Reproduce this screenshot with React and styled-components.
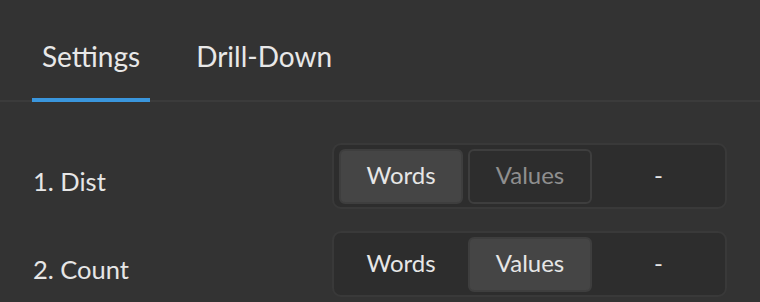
import React, { useState } from "react";
import styled, { createGlobalStyle } from "styled-components";

const Global = createGlobalStyle`
  html, body { margin: 0; padding: 0; background: #333333; }
  body { font-family: Lato, "Noto Sans", sans-serif; color: #e6e6e6; }
  * { box-sizing: border-box; }
`;

const Page = styled.div`
  width: 760px;
  height: 302px;
  overflow: hidden;
  background: #333333;
`;

const TabBar = styled.div`
  display: flex;
  align-items: stretch;
  height: 102px;
  padding: 0 32px;
  border-bottom: 2px solid #3b3b3b;
  gap: 36px;
`;

const Tab = styled.div`
  display: flex;
  align-items: center;
  padding: 14px 10px 0;
  font-size: 28px;
  color: #e8e8e8;
  border-bottom: 4px solid ${(p) => (p.$active ? "#3a96dd" : "transparent")};
  margin-bottom: -2px;
  cursor: pointer;
`;

const Content = styled.div`
  display: flex;
  flex-direction: column;
  gap: 22px;
  padding: 41px 33px 0 33px;
`;

const Row = styled.div`
  display: grid;
  grid-template-columns: 299px 1fr;
  align-items: center;
`;

const Label = styled.div`
  font-size: 25.5px;
  color: #e6e6e6;
  padding-top: 10px;
`;

const Segmented = styled.div`
  display: flex;
  align-items: center;
  gap: 5px;
  height: 66px;
  padding: 0 5px;
  background: #2d2d2d;
  border: 2px solid #393939;
  border-radius: 9px;
`;

const SegButton = styled.div`
  width: 124px;
  height: 55px;
  display: flex;
  align-items: center;
  justify-content: center;
  padding-bottom: 3px;
  font-size: 24px;
  border-radius: 6px;
  background: ${(p) => (p.$active ? "#454545" : "transparent")};
  border: 2px solid ${(p) => (p.$active ? "#3e3e3e" : p.$outlined ? "#3e3e3e" : "transparent")};
  color: ${(p) => (p.$muted ? "#8f8f8f" : "#e6e6e6")};
`;

const Dash = styled.div`
  flex: 1;
  text-align: center;
  padding-bottom: 3px;
  font-size: 24px;
  color: #e6e6e6;
`;

const rows = [
  { label: "1. Dist", active: "Words", muted: "Values" },
  { label: "2. Count", active: "Values" },
];

export default function App() {
  const [tab, setTab] = useState("Settings");
  return (
    <Page>
      <Global />
      <TabBar>
        {["Settings", "Drill-Down"].map((t) => (
          <Tab key={t} $active={tab === t} onClick={() => setTab(t)}>
            {t}
          </Tab>
        ))}
      </TabBar>
      <Content>
        {rows.map((r) => (
          <Row key={r.label}>
            <Label>{r.label}</Label>
            <Segmented>
              {["Words", "Values"].map((o) => (
                <SegButton
                  key={o}
                  $active={r.active === o}
                  $outlined={r.muted === o}
                  $muted={r.muted === o}
                >
                  {o}
                </SegButton>
              ))}
              <Dash>-</Dash>
            </Segmented>
          </Row>
        ))}
      </Content>
    </Page>
  );
}
